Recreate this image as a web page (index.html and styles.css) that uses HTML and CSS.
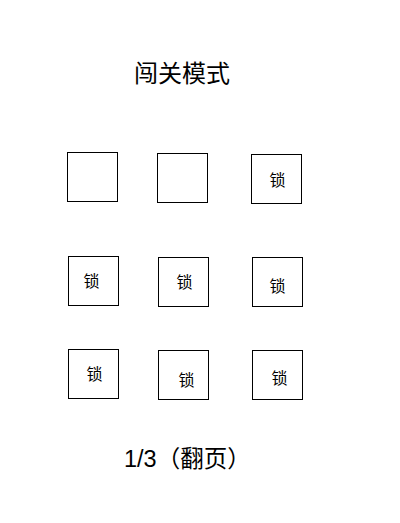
FILE: index.html
```html
<!DOCTYPE html>
<html lang="zh-CN">
<head>
<meta charset="utf-8">
<title>闯关模式</title>
<link rel="stylesheet" href="styles.css">
</head>
<body>
<main class="page">
  <h1 class="title">闯关模式</h1>
  <div class="levels">
    <div class="level"></div>
    <div class="level dn1"></div>
    <div class="level dn2 locked"><span class="lock tx1">锁</span></div>
    <div class="level dr1 locked"><span class="lock tx-2 ty-1">锁</span></div>
    <div class="level dr1 dn1 locked"><span class="lock tx1 ty-1">锁</span></div>
    <div class="level dr1 dn1 locked"><span class="lock ty3">锁</span></div>
    <div class="level dr1 locked"><span class="lock tx1 ty-1">锁</span></div>
    <div class="level dr1 dn1 locked"><span class="lock tx3 ty4">锁</span></div>
    <div class="level dr1 dn1 locked"><span class="lock tx2 ty2">锁</span></div>
  </div>
  <p class="pager">1/3（翻页）</p>
</main>
</body>
</html>
```

FILE: styles.css
```css
html, body {
  margin: 0;
  padding: 0;
  background: #ffffff;
}

body {
  font-family: "Liberation Sans", "Noto Sans CJK SC", sans-serif;
  color: #000000;
}

.page {
  display: flex;
  flex-direction: column;
  width: 400px;
  height: 523px;
  overflow: hidden;
}

.title {
  margin: 62px 0 0 0;
  padding-left: 134px;
  font-size: 24px;
  line-height: 24px;
  font-weight: normal;
}

.levels {
  margin: 66px 0 0 67px;
  display: grid;
  grid-template-columns: 90px 94px 51px;
  grid-template-rows: 104px 93px 51px;
  align-items: start;
  justify-items: start;
}

.level {
  box-sizing: border-box;
  width: 51px;
  height: 50px;
  border: 1px solid #000000;
  display: flex;
  align-items: center;
  justify-content: center;
}

.dn1 { margin-top: 1px; }
.dn2 { margin-top: 2px; }
.dr1 { margin-left: 1px; }

.lock {
  font-size: 16px;
  line-height: 16px;
  font-family: "Noto Sans CJK SC", sans-serif;
}

.tx1 { translate: 1px 0; }
.tx2 { translate: 2px 0; }
.tx3 { translate: 3px 0; }
.tx-2 { translate: -2px 0; }
.tx-2.ty-1 { translate: -2px -1px; }
.tx1.ty-1 { translate: 1px -1px; }
.ty3 { translate: 0 3px; }
.tx3.ty4 { translate: 3px 4px; }
.tx2.ty2 { translate: 2px 2px; }

.pager {
  margin: 47px 0 0 0;
  padding-left: 124px;
  font-size: 23.5px;
  line-height: 24px;
}
```
